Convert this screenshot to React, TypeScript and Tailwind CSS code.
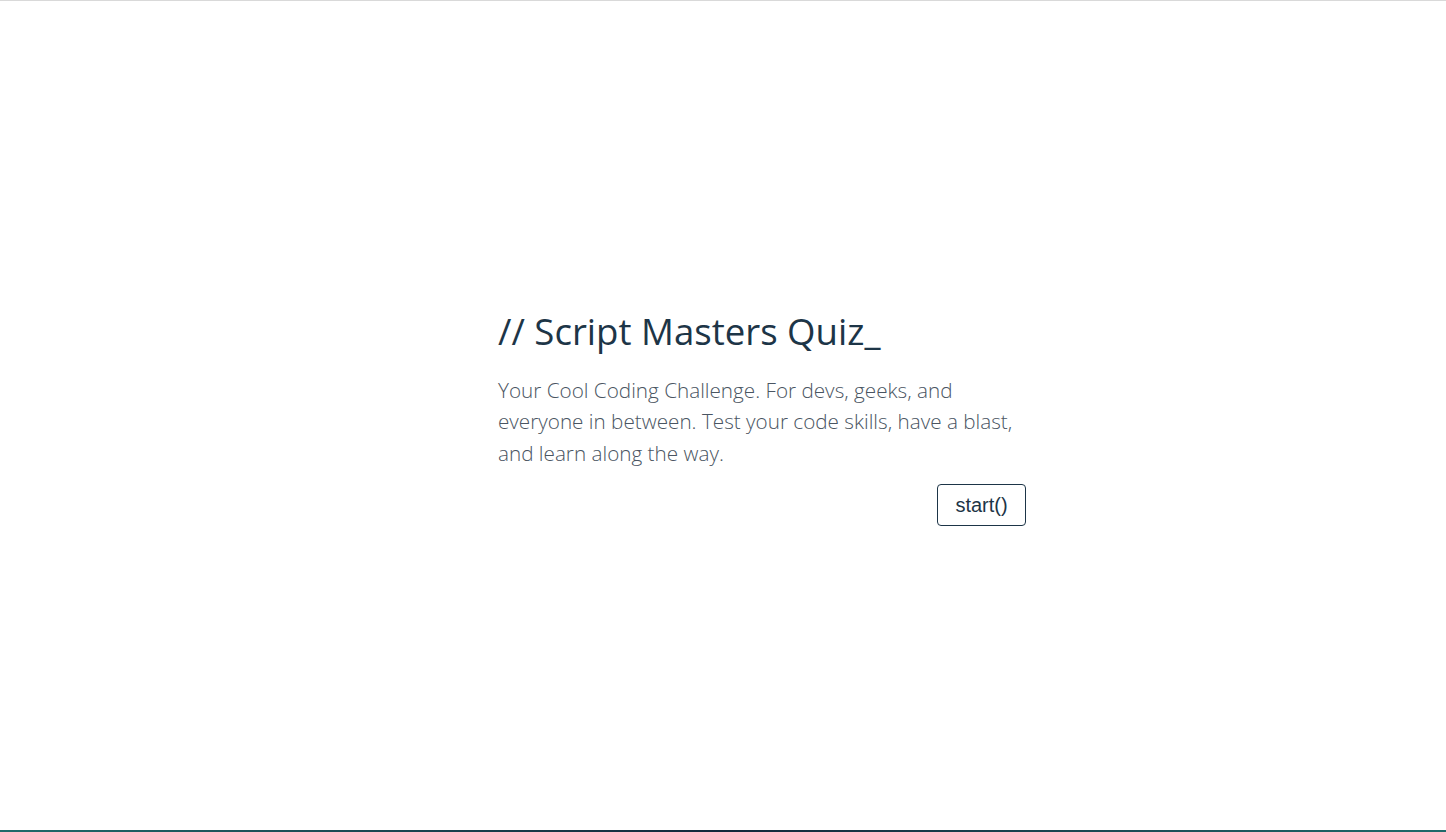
export default function App() {
  return (
    <div className="flex h-screen flex-col bg-white border-t border-[#d9d9d9]">
      <main className="flex flex-1 items-center justify-center pl-[78px] pt-[4px]">
        <div className="w-[528px] font-['Open_Sans',sans-serif]">
          <h1 className="text-[36.6px] leading-[44px] font-normal text-[#1d3547]">
            // Script Masters Quiz_
          </h1>
          <p className="mt-[22px] text-[20.7px] leading-[31.5px] font-light text-[#4a5562]">
            Your Cool Coding Challenge. For devs, geeks, and everyone in between. Test your code skills, have a blast, and learn along the way.
          </p>
          <div className="mt-[15px] flex justify-end">
            <button className="h-[42px] w-[89px] rounded-[4px] border border-[#1d3547] font-['Liberation_Sans',Arial,sans-serif] text-[20px] text-[#1d3547]">
              start()
            </button>
          </div>
        </div>
      </main>
      <div className="h-[2px] bg-gradient-to-r from-[#1f6a6a] via-[#13283b] to-[#1f6a6a]" />
    </div>
  );
}
